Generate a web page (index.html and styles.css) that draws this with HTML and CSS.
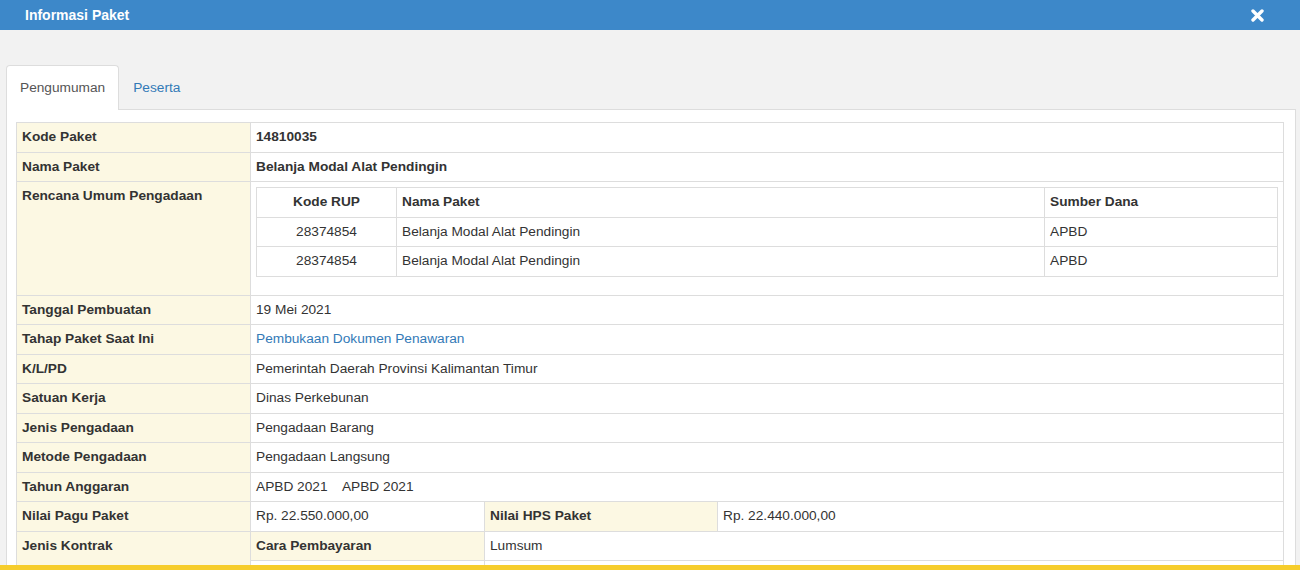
FILE: index.html
```html
<!DOCTYPE html>
<html lang="id">
<head>
<meta charset="utf-8">
<title>Informasi Paket</title>
<link rel="stylesheet" href="styles.css">
</head>
<body>
<div class="modal-header">
  <span class="modal-title">Informasi Paket</span>
  <span class="close" aria-label="Tutup">
    <svg width="13" height="13" viewBox="0 0 13 13"><path d="M2 2 L11 11 M11 2 L2 11" stroke="#fff" stroke-width="3.4" stroke-linecap="round"/></svg>
  </span>
</div>
<div class="modal-body">
  <ul class="tabs">
    <li class="tab active">Pengumuman</li>
    <li class="tab"><a href="#">Peserta</a></li>
  </ul>
  <div class="panel">
    <table class="info">
      <colgroup>
        <col class="c1"><col class="c2"><col class="c3"><col>
      </colgroup>
      <tr><th>Kode Paket</th><td colspan="3" class="strong">14810035</td></tr>
      <tr><th>Nama Paket</th><td colspan="3" class="strong">Belanja Modal Alat Pendingin</td></tr>
      <tr><th>Rencana Umum Pengadaan</th>
        <td colspan="3">
          <table class="rup">
            <colgroup><col class="r1"><col class="r2"><col></colgroup>
            <tr><th class="center">Kode RUP</th><th>Nama Paket</th><th>Sumber Dana</th></tr>
            <tr><td class="center">28374854</td><td>Belanja Modal Alat Pendingin</td><td>APBD</td></tr>
            <tr><td class="center">28374854</td><td>Belanja Modal Alat Pendingin</td><td>APBD</td></tr>
          </table>
        </td>
      </tr>
      <tr><th>Tanggal Pembuatan</th><td colspan="3">19 Mei 2021</td></tr>
      <tr><th>Tahap Paket Saat Ini</th><td colspan="3"><a href="#">Pembukaan Dokumen Penawaran</a></td></tr>
      <tr><th>K/L/PD</th><td colspan="3">Pemerintah Daerah Provinsi Kalimantan Timur</td></tr>
      <tr><th>Satuan Kerja</th><td colspan="3">Dinas Perkebunan</td></tr>
      <tr><th>Jenis Pengadaan</th><td colspan="3">Pengadaan Barang</td></tr>
      <tr><th>Metode Pengadaan</th><td colspan="3">Pengadaan Langsung</td></tr>
      <tr><th>Tahun Anggaran</th><td colspan="3">APBD 2021&nbsp;&nbsp;&nbsp; APBD 2021</td></tr>
      <tr><th>Nilai Pagu Paket</th><td>Rp. 22.550.000,00</td><th>Nilai HPS Paket</th><td>Rp. 22.440.000,00</td></tr>
      <tr><th rowspan="2">Jenis Kontrak</th><th>Cara Pembayaran</th><td colspan="2">Lumsum</td></tr>
      <tr><td>&nbsp;</td><td colspan="2">&nbsp;</td></tr>
    </table>
  </div>
</div>
<div class="bottom-bar"></div>
</body>
</html>
```

FILE: styles.css
```css
* { box-sizing: border-box; }

html, body {
  margin: 0;
  padding: 0;
  height: 100%;
  overflow: hidden;
}

body {
  background: #f2f2f2;
  font-family: "Liberation Sans", Arial, sans-serif;
  font-size: 13.7px;
  line-height: 18.5px;
  color: #333;
}

a { color: #337ab7; text-decoration: none; }

.modal-header {
  height: 30px;
  background: #3d88c9;
  display: flex;
  align-items: center;
  justify-content: space-between;
  padding: 0 36px 0 25px;
}

.modal-title {
  color: #fff;
  font-weight: bold;
  font-size: 14px;
}

.close {
  display: flex;
  align-items: center;
}

.modal-body {
  padding: 35px 4px 0 6px;
}

.tabs {
  list-style: none;
  margin: 0;
  padding: 0;
  display: flex;
  height: 44px;
}

.tab {
  padding: 13px 13px;
  color: #555;
  border: 1px solid transparent;
  border-bottom: none;
  border-radius: 4px 4px 0 0;
}

.tab.active {
  background: #fff;
  border-color: #ddd;
  margin-bottom: -1px;
  height: 45px;
  position: relative;
  z-index: 1;
}

.panel {
  background: #fff;
  border: 1px solid #ddd;
  padding: 12px 11px 0 9px;
}

.info {
  width: 100%;
  border-collapse: collapse;
  table-layout: fixed;
}

.info col.c1 { width: 234px; }
.info col.c2 { width: 234px; }
.info col.c3 { width: 233px; }

.info > tbody > tr > th,
.info > tbody > tr > td {
  border: 1px solid #ddd;
  padding: 5px;
  text-align: left;
  vertical-align: top;
}

.info > tbody > tr > th {
  background: #fcf8e3;
  font-weight: bold;
}

.info td.strong { font-weight: bold; }

.rup {
  width: 100%;
  border-collapse: collapse;
  table-layout: fixed;
  margin-bottom: 13px;
}

.rup col.r1 { width: 140px; }
.rup col.r2 { width: 648px; }

.rup th,
.rup td {
  border: 1px solid #ddd;
  padding: 5px;
  text-align: left;
  font-weight: normal;
}

.rup th { font-weight: bold; }

.rup .center { text-align: center; }

.bottom-bar {
  position: fixed;
  left: 0;
  right: 0;
  bottom: 0;
  height: 5px;
  background: #f6cd2c;
}
```
